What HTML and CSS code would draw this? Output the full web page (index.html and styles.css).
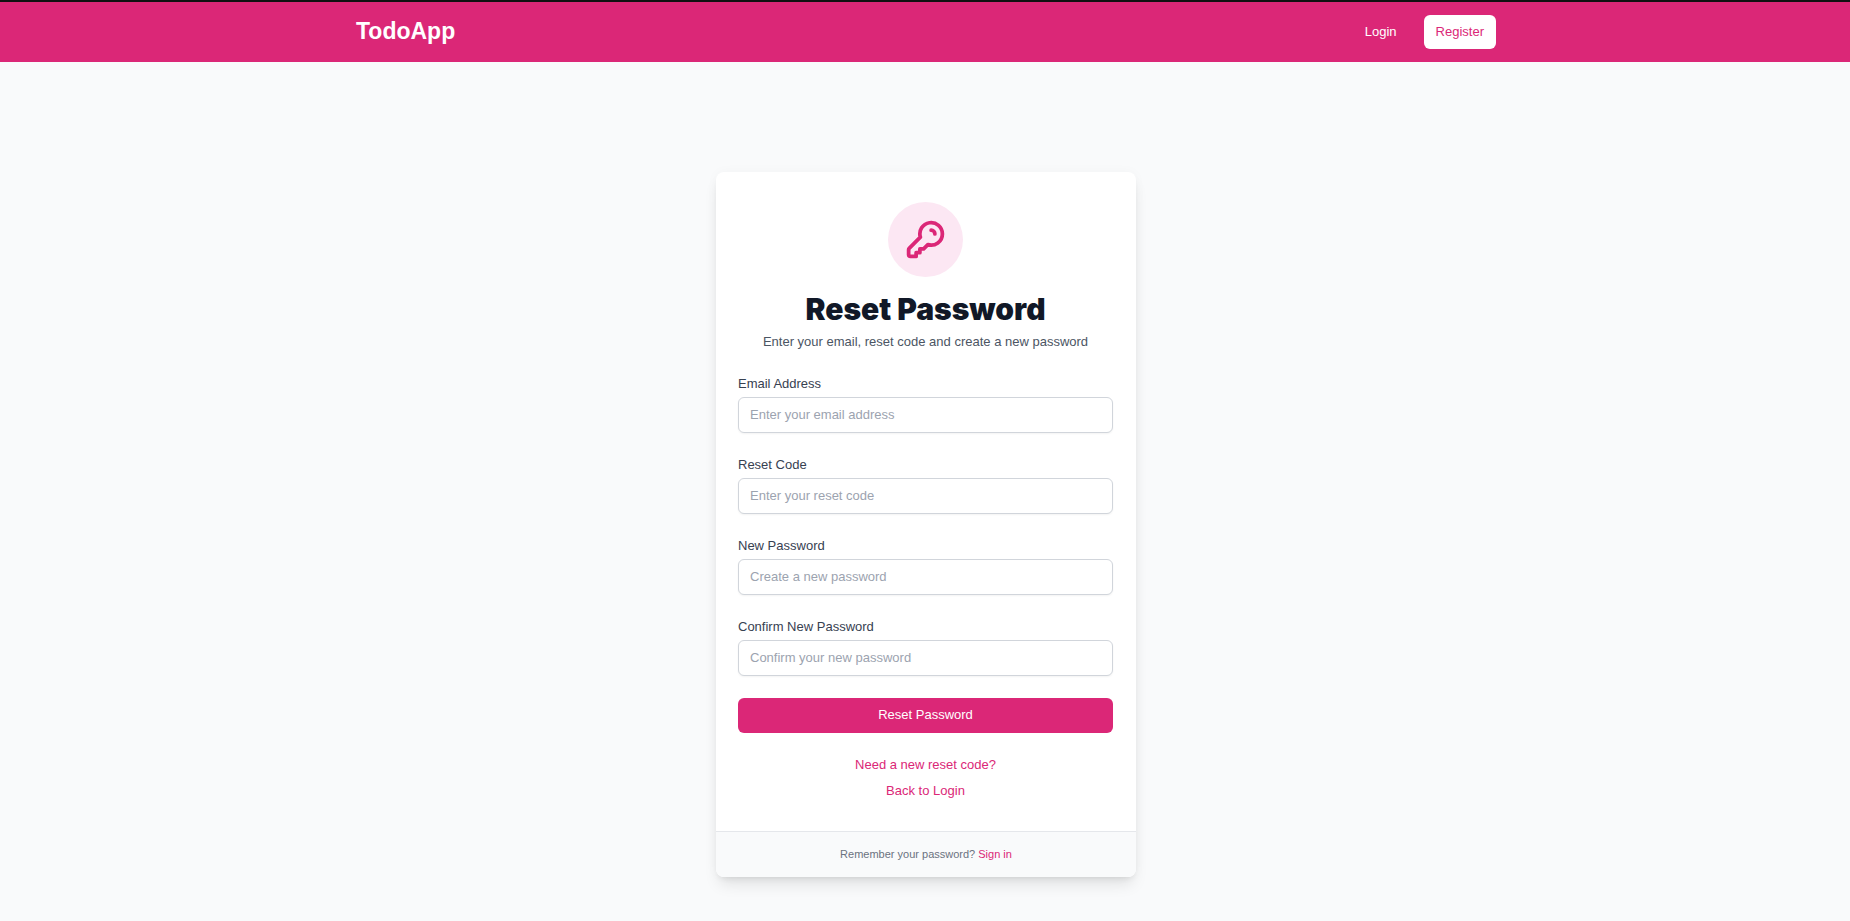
FILE: index.html
```html
<!DOCTYPE html>
<html lang="en">
<head>
<meta charset="utf-8">
<meta name="viewport" content="width=device-width, initial-scale=1">
<title>Reset Password - TodoApp</title>
<link rel="stylesheet" href="styles.css">
</head>
<body>
<header class="navbar">
  <div class="navbar-inner">
    <a class="brand" href="#">TodoApp</a>
    <nav class="nav-links">
      <a class="nav-login" href="#">Login</a>
      <a class="nav-register" href="#">Register</a>
    </nav>
  </div>
</header>
<main class="page">
  <section class="card">
    <div class="card-body">
      <div class="badge">
        <svg class="badge-icon" viewBox="0 0 24 24" fill="none" stroke="currentColor" stroke-width="2" stroke-linecap="round" stroke-linejoin="round" aria-hidden="true"><path d="M15 7a2 2 0 012 2m4 0a6 6 0 01-7.743 5.743L11 17H9v2H7v2H4a1 1 0 01-1-1v-2.586a1 1 0 01.293-.707l5.964-5.964A6 6 0 1121 9z"/></svg>
      </div>
      <h1 class="title">Reset Password</h1>
      <p class="subtitle">Enter your email, reset code and create a new password</p>
      <form class="form">
        <div class="field">
          <label class="label" for="email">Email Address</label>
          <input class="input" id="email" type="email" placeholder="Enter your email address">
        </div>
        <div class="field">
          <label class="label" for="code">Reset Code</label>
          <input class="input" id="code" type="text" placeholder="Enter your reset code">
        </div>
        <div class="field">
          <label class="label" for="password">New Password</label>
          <input class="input" id="password" type="password" placeholder="Create a new password">
        </div>
        <div class="field">
          <label class="label" for="confirm">Confirm New Password</label>
          <input class="input" id="confirm" type="password" placeholder="Confirm your new password">
        </div>
        <button class="submit" type="submit">Reset Password</button>
      </form>
      <div class="links">
        <a href="#">Need a new reset code?</a>
        <a href="#">Back to Login</a>
      </div>
    </div>
    <footer class="card-footer">Remember your password? <a href="#">Sign in</a></footer>
  </section>
</main>
</body>
</html>
```
FILE: styles.css
```css
* { box-sizing: border-box; }
body {
  margin: 0;
  min-height: 100vh;
  display: flex;
  flex-direction: column;
  background: #f9fafb;
  color: #111827;
  font-family: "Liberation Sans", Arial, sans-serif;
  font-size: 13px;
  line-height: 20px;
}
a { color: #db2777; text-decoration: none; }
.navbar { background: #db2777; border-top: 2px solid #111; }
.navbar-inner {
  max-width: 1200px;
  height: 60px;
  margin: 0 auto;
  padding: 0 29px 2px 31px;
  display: flex;
  align-items: center;
  justify-content: space-between;
}
.brand { color: #fff; font-size: 23px; line-height: 30px; font-weight: 700; }
.nav-links { display: flex; align-items: center; gap: 16px; padding-top: 2px; }
.nav-login { color: #fff; padding: 7px 11px; }
.nav-register { background: #fff; border-radius: 6px; padding: 7px 12px; }
.page {
  flex: 1;
  display: flex;
  align-items: center;
  justify-content: center;
  padding: 110px 16px 44px 18px;
}
.card {
  width: 100%;
  max-width: 420px;
  background: #fff;
  border-radius: 8px;
  overflow: hidden;
  box-shadow: 0 10px 15px -3px rgba(0, 0, 0, 0.1), 0 4px 6px -4px rgba(0, 0, 0, 0.1), 0 0 12px rgba(0, 0, 0, 0.03);
}
.card-body { padding: 30px 23px 30px 22px; }
.badge {
  width: 75px;
  height: 75px;
  margin: 0 auto 15px;
  display: flex;
  align-items: center;
  justify-content: center;
  border-radius: 50%;
  background: #fce7f3;
  color: #db2777;
}
.badge-icon { width: 45px; height: 45px; }
.title {
  margin: 0;
  font-family: "Arial Black", Inter, "Liberation Sans", sans-serif;
  font-size: 30px;
  line-height: 34px;
  font-weight: 900;
  text-align: center;
}
.subtitle { margin: 6px 0 0; color: #4b5563; text-align: center; }
.form { display: flex; flex-direction: column; gap: 22px; margin-top: 22px; }
.field { display: flex; flex-direction: column; gap: 3px; }
.label { color: #374151; }
.input {
  width: 100%;
  height: 36px;
  padding: 0 11px 2px;
  border: 1px solid #d1d5db;
  border-radius: 6px;
  background: #fff;
  box-shadow: 0 1px 2px rgba(0, 0, 0, 0.05);
  color: #111827;
  font: inherit;
}
.input::placeholder { color: #9ca3af; opacity: 1; }
.submit {
  height: 35px;
  padding: 0 15px 2px;
  border: 0;
  border-radius: 6px;
  background: #db2777;
  color: #fff;
  font: inherit;
}
.links { display: flex; flex-direction: column; align-items: center; gap: 6px; margin-top: 22px; }
.card-footer {
  padding: 15px 22px;
  border-top: 1px solid #e5e7eb;
  background: #f9fafb;
  color: #6b7280;
  font-size: 11px;
  line-height: 15px;
  text-align: center;
}
```
